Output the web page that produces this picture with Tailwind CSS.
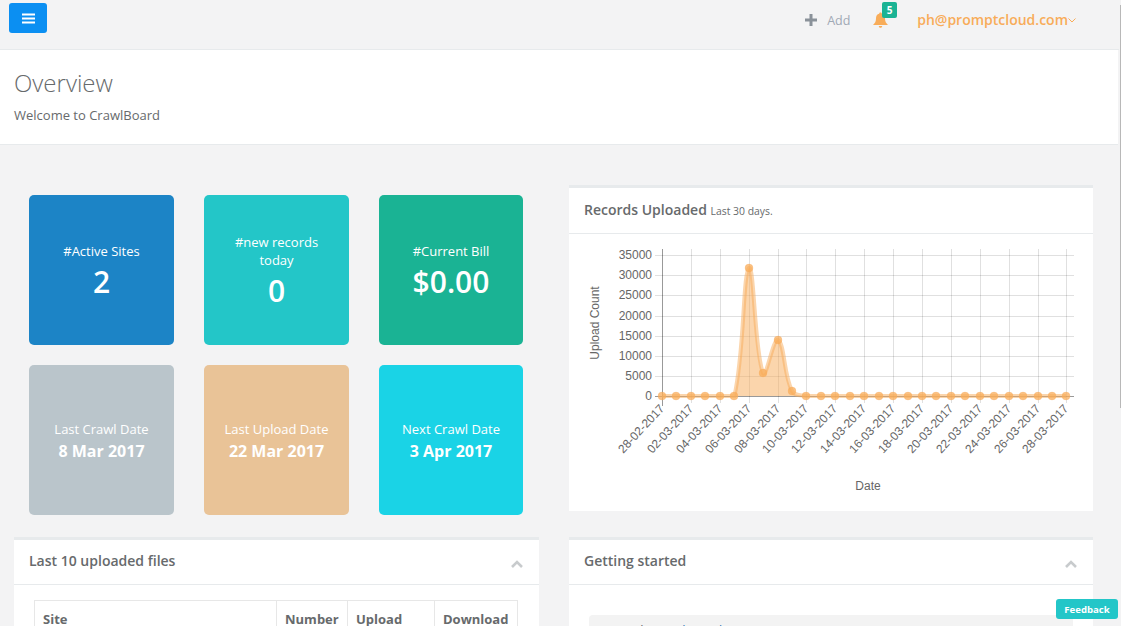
<!DOCTYPE html>
<html>
<head>
<meta charset="utf-8">
<script src="https://cdn.jsdelivr.net/npm/@tailwindcss/browser@4"></script>
</head>
<body class="m-0 overflow-hidden">
<div class="relative w-[1121px] h-[626px] overflow-hidden bg-[#f3f3f4] font-['Open_Sans',sans-serif] text-[13px] text-[#676a6c]">

  <div class="w-[1119px] h-[50px] flex items-start justify-between border-b border-[#e7eaec] pr-[43px]">
    <button class="mt-[3px] ml-[9px] w-[38px] h-[30px] rounded-[3px] bg-[#0b8ff2] flex items-center justify-center">
      <svg width="13" height="11" viewBox="0 0 13 11"><path d="M0 0.5h13v2H0zM0 4.5h13v2H0zM0 8.5h13v2H0z" fill="#fff"/></svg>
    </button>
    <div class="flex items-center h-[40px] pt-0">
      <svg width="12" height="12" viewBox="0 0 12 12" class="mr-[10px]"><path d="M4.5 0h3v4.5H12v3H7.5V12h-3V7.5H0v-3h4.5z" fill="#8a9199"/></svg>
      <span class="text-[12.5px] text-[#a0a8b4] w-[23px] pt-[2px]">Add</span>
      <div class="relative ml-[23px] w-[15px] h-[16px]">
        <svg width="15" height="16" viewBox="0 0 15 16" class="absolute left-0 top-0"><path d="M7.5 0.5c.8 0 1.3.5 1.3 1.2 2.2.5 3.2 2.2 3.2 4.6 0 3.3 1 4.8 3 6.7H0c2-1.900 3-3.400 3-6.700 0-2.400 1-4.100 3.200-4.600C6.200 1 6.700.5 7.500.5zM5.800 14h3.400c0 1-.7 1.800-1.700 1.800S5.800 15 5.800 14z" fill="#f8ac59"/></svg>
        <span class="absolute left-[9px] top-[-10px] w-[15px] h-[16px] rounded-[2px] bg-[#1ab394] text-white text-[10px] font-bold leading-[16px] text-center">5</span>
      </div>
      <span class="ml-[29px] text-[14px] font-semibold text-[#f8ac59] whitespace-nowrap mt-[-1px]">ph@promptcloud.com</span>
      <svg width="8" height="5" viewBox="0 0 8 5" class="mt-[1px]"><path d="M.5.5 4 4 7.500.5" fill="none" stroke="#f8ac59" stroke-width="1"/></svg>
    </div>
  </div>

  <div class="w-[1118px] h-[95px] bg-white border-b border-[#e7eaec] pl-[14px] pt-[17px]">
    <h2 class="text-[24px] font-light leading-[32px] text-[#676a6c]">Overview</h2>
    <p class="mt-[7px] text-[13px] leading-[18px]">Welcome to CrawlBoard</p>
  </div>

  <div class="w-[1093px] ml-[14px] mt-[40px] grid grid-cols-[525px_524px] gap-x-[30px] items-start">
    <div class="flex flex-col">
      <div class="grid grid-cols-[145px_145px_144px] gap-x-[30px] gap-y-[20px] pl-[15px] pt-[10px]">
        <div class="h-[150px] pt-[2px] rounded-[5px] bg-[#1c84c6] text-white flex flex-col items-center justify-center text-center">
          <div class="text-[13px] font-normal leading-[18px]">#Active Sites</div>
          <div class="text-[30px] font-semibold leading-[36px] mt-[4px]">2</div>
        </div>
        <div class="h-[150px] pt-[2px] rounded-[5px] bg-[#23c6c8] text-white flex flex-col items-center justify-center text-center">
          <div class="text-[13px] font-normal leading-[18px]">#new records<br>today</div>
          <div class="text-[30px] font-semibold leading-[36px] mt-[4px]">0</div>
        </div>
        <div class="h-[150px] pt-[2px] rounded-[5px] bg-[#1ab394] text-white flex flex-col items-center justify-center text-center">
          <div class="text-[13px] font-normal leading-[18px]">#Current Bill</div>
          <div class="text-[30px] font-semibold leading-[36px] mt-[4px]">$0.00</div>
        </div>
        <div class="h-[150px] pt-[3px] rounded-[5px] bg-[#bac5cb] text-white flex flex-col items-center justify-center text-center">
          <div class="text-[13px] font-normal leading-[18px]">Last Crawl Date</div>
          <div class="text-[16px] font-bold leading-[24px] mt-[1px]">8 Mar 2017</div>
        </div>
        <div class="h-[150px] pt-[3px] rounded-[5px] bg-[#e9c397] text-white flex flex-col items-center justify-center text-center">
          <div class="text-[13px] font-normal leading-[18px]">Last Upload Date</div>
          <div class="text-[16px] font-bold leading-[24px] mt-[1px]">22 Mar 2017</div>
        </div>
        <div class="h-[150px] pt-[3px] rounded-[5px] bg-[#1ad3e6] text-white flex flex-col items-center justify-center text-center">
          <div class="text-[13px] font-normal leading-[18px]">Next Crawl Date</div>
          <div class="text-[16px] font-bold leading-[24px] mt-[1px]">3 Apr 2017</div>
        </div>
      </div>

      <div class="mt-[22px] bg-white border-t-[3px] border-[#e7eaec]">
        <div class="h-[45px] pb-[3px] border-b border-[#e7eaec] flex items-center justify-between pl-[15px] pr-[16px]">
          <h5 class="text-[14px] font-semibold text-[#676a6c]">Last 10 uploaded files</h5>
          <svg width="12" height="8" viewBox="0 0 12 8" class="mt-[6px]"><path d="M1 7l5-5 5 5" fill="none" stroke="#c8cbcd" stroke-width="2.600"/></svg>
        </div>
        <div class="pt-[15px] pl-[20px]">
          <table class="w-[484px] table-fixed border-collapse text-[13px] font-bold text-left">
            <colgroup><col class="w-[242px]"><col class="w-[71px]"><col class="w-[87px]"><col class="w-[83px]"></colgroup>
            <tr class="h-[38px]">
              <th class="border border-[#e7e7e7] px-[8px] font-bold">Site</th>
              <th class="border border-[#e7e7e7] px-[8px] font-bold">Number</th>
              <th class="border border-[#e7e7e7] px-[8px] font-bold">Upload</th>
              <th class="border border-[#e7e7e7] px-[8px] font-bold">Download</th>
            </tr>
          </table>
        </div>
      </div>
    </div>

    <div class="flex flex-col">
      <div class="bg-white border-t-[3px] border-[#e7eaec]">
        <div class="h-[46px] pb-[2px] border-b border-[#e7eaec] flex items-center pl-[15px]">
          <h5 class="text-[14px] font-semibold text-[#676a6c] whitespace-nowrap">Records Uploaded <small class="text-[10.4px] font-normal">Last 30 days.</small></h5>
        </div>
        <svg width="524" height="277" viewBox="569 234 524 277" class="block" font-family="'Liberation Sans',sans-serif" font-size="12" fill="#666">
          <g stroke="#000" stroke-opacity=".12" stroke-width="1" shape-rendering="crispEdges">
            <path d="M655 255.500H1074M655 275.500H1074M655 295.500H1074M655 316.500H1074M655 336.500H1074M655 356.500H1074M655 376.500H1074"/>
            <path d="M691.500 249V403M720.500 249V403M749.500 249V403M778.500 249V403M806.500 249V403M835.500 249V403M864.500 249V403M893.500 249V403M922.500 249V403M951.500 249V403M980.500 249V403M1009.500 249V403M1038.500 249V403M1066.500 249V403"/>
          </g>
          <g stroke="#000" stroke-opacity=".4" stroke-width="1" shape-rendering="crispEdges">
            <path d="M662.500 249V406M655 396.500H1074"/>
          </g>
          <g text-anchor="end">
            <text x="652" y="259">35000</text><text x="652" y="279">30000</text><text x="652" y="299">25000</text><text x="652" y="320">20000</text><text x="652" y="340">15000</text><text x="652" y="360">10000</text><text x="652" y="380">5000</text><text x="652" y="400">0</text>
          </g>
          <text transform="translate(599 323) rotate(-90)" text-anchor="middle">Upload Count</text>
          <text x="868" y="490" text-anchor="middle">Date</text>
          <g text-anchor="end">
            <text transform="translate(665 409) rotate(-47)">28-02-2017</text>
            <text transform="translate(694 409) rotate(-47)">02-03-2017</text>
            <text transform="translate(723 409) rotate(-47)">04-03-2017</text>
            <text transform="translate(752 409) rotate(-47)">06-03-2017</text>
            <text transform="translate(781 409) rotate(-47)">08-03-2017</text>
            <text transform="translate(809 409) rotate(-47)">10-03-2017</text>
            <text transform="translate(838 409) rotate(-47)">12-03-2017</text>
            <text transform="translate(867 409) rotate(-47)">14-03-2017</text>
            <text transform="translate(896 409) rotate(-47)">16-03-2017</text>
            <text transform="translate(925 409) rotate(-47)">18-03-2017</text>
            <text transform="translate(954 409) rotate(-47)">20-03-2017</text>
            <text transform="translate(983 409) rotate(-47)">22-03-2017</text>
            <text transform="translate(1012 409) rotate(-47)">24-03-2017</text>
            <text transform="translate(1041 409) rotate(-47)">26-03-2017</text>
            <text transform="translate(1069 409) rotate(-47)">28-03-2017</text>
          </g>
          <path d="M662 396L734.400 396C744.800 350 742.700 273 749 268C754.200 263.850 754.400 351.500 763 373C766 380.300 773.300 337.100 778 340C784.900 344.300 783.300 373.500 792 391C794.500 395.900 800.200 395 806 396L1066 396Z" fill="#f8ac59" fill-opacity=".5" stroke="none"/>
          <path d="M662 396L734.400 396C744.800 350 742.700 273 749 268C754.200 263.850 754.400 351.500 763 373C766 380.300 773.300 337.100 778 340C784.900 344.300 783.300 373.500 792 391C794.500 395.900 800.200 395 806 396L1066 396" fill="none" stroke="#f8ac59" stroke-opacity=".5" stroke-width="4"/>
          <g fill="#f8ac59" fill-opacity=".75" stroke="#f8ac59" stroke-opacity=".2" stroke-width="1">
            <circle cx="662" cy="396" r="4"/><circle cx="676" cy="396" r="4"/><circle cx="691" cy="396" r="4"/><circle cx="705" cy="396" r="4"/><circle cx="720" cy="396" r="4"/><circle cx="734" cy="396" r="4"/><circle cx="749" cy="268" r="4"/><circle cx="763" cy="373" r="4"/><circle cx="778" cy="340" r="4"/><circle cx="792" cy="391" r="4"/><circle cx="806" cy="396" r="4"/><circle cx="821" cy="396" r="4"/><circle cx="835" cy="396" r="4"/><circle cx="850" cy="396" r="4"/><circle cx="864" cy="396" r="4"/><circle cx="879" cy="396" r="4"/><circle cx="893" cy="396" r="4"/><circle cx="908" cy="396" r="4"/><circle cx="922" cy="396" r="4"/><circle cx="936" cy="396" r="4"/><circle cx="951" cy="396" r="4"/><circle cx="965" cy="396" r="4"/><circle cx="980" cy="396" r="4"/><circle cx="994" cy="396" r="4"/><circle cx="1009" cy="396" r="4"/><circle cx="1023" cy="396" r="4"/><circle cx="1038" cy="396" r="4"/><circle cx="1052" cy="396" r="4"/><circle cx="1066" cy="396" r="4"/>
          </g>
        </svg>
      </div>

      <div class="mt-[26px] bg-white border-t-[3px] border-[#e7eaec]">
        <div class="h-[45px] pb-[3px] border-b border-[#e7eaec] flex items-center justify-between pl-[15px] pr-[16px]">
          <h5 class="text-[14px] font-semibold text-[#676a6c]">Getting started</h5>
          <svg width="12" height="8" viewBox="0 0 12 8" class="mt-[6px]"><path d="M1 7l5-5 5 5" fill="none" stroke="#c8cbcd" stroke-width="2.600"/></svg>
        </div>
        <div class="pt-[30px] px-[20px]">
          <div class="h-[40px] rounded-[4px] bg-[#f3f3f3] px-[15px] pt-[6px] text-[13px] leading-[18px]">Launch <a class="text-[#337ab7]">CrawlBoard Tour</a></div>
        </div>
      </div>
    </div>
  </div>

  <div class="absolute left-[1056px] top-[599px] w-[62px] h-[20px] rounded-[3px] bg-[#23c6c8] text-white text-[9.6px] font-bold leading-[21px] text-center">Feedback</div>
  <div class="absolute left-[1120px] top-[5px] w-[1px] h-[403px] bg-[#b8b8b8]"></div>
</div>
</body>
</html>
